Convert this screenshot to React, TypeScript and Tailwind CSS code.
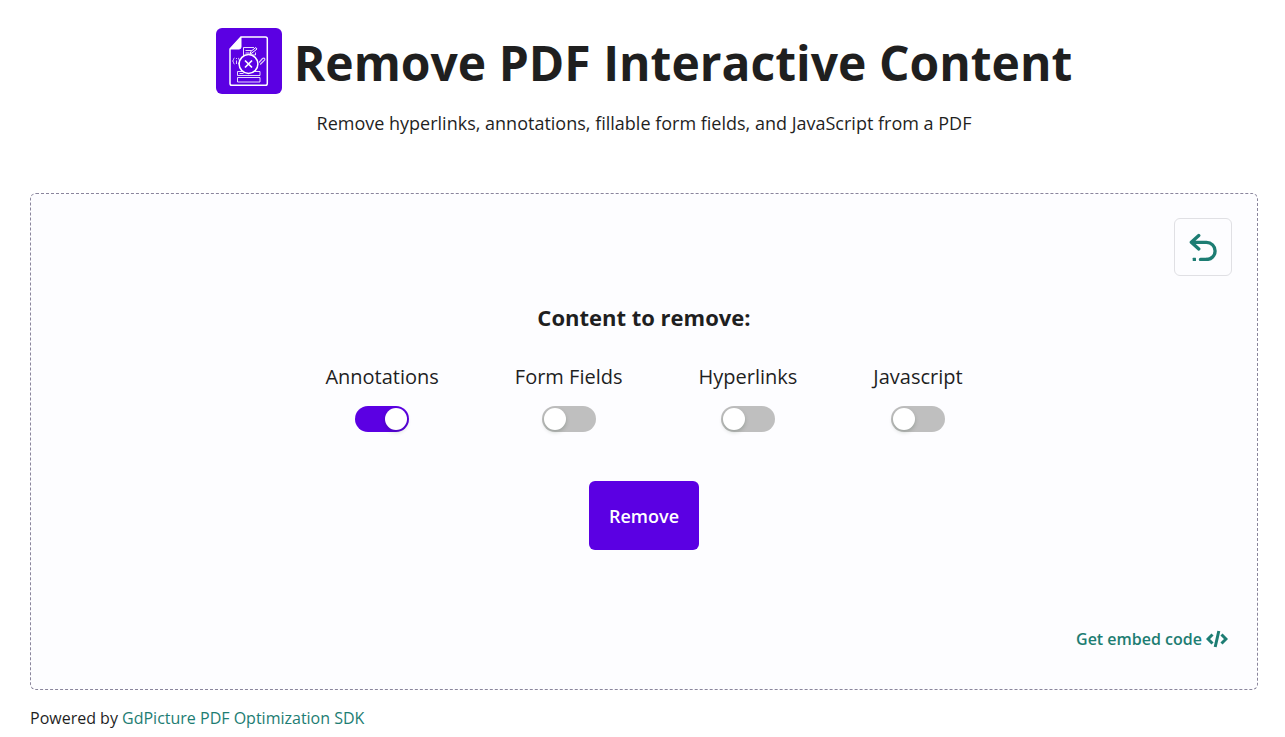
import { useState } from 'react'

const options = [
  { id: 'annotations', label: 'Annotations' },
  { id: 'form-fields', label: 'Form Fields' },
  { id: 'hyperlinks', label: 'Hyperlinks' },
  { id: 'javascript', label: 'Javascript' },
]

function ToolIcon() {
  return (
    <svg viewBox="0 0 66 66" className="size-[66px] shrink-0" fill="none" stroke="#fff" aria-hidden="true">
      <rect width="66" height="66" rx="6" fill="#5b00e3" stroke="none" />
      {/* Page with folded corner */}
      <path d="M25 9h24.500a1.800 1.800 0 0 1 1.800 1.800v44.700a1.800 1.800 0 0 1-1.800 1.800H15.800a1.800 1.800 0 0 1-1.800-1.800V21z" strokeWidth="1.500" />
      <path d="M14 21 25 9.200V19a2 2 0 0 1-2 2z" fill="#fff" strokeWidth="1" />
      {/* Note and pencil */}
      <path d="M27.500 28v-8.500H38M29.500 22.500h6M29.500 25h4M39.500 24.500V27H35" strokeWidth="1" strokeOpacity="0.85" />
      <path d="m34 26 .8-2.500 5-4 1.200 1.500-5 4z" strokeWidth="1" />
      {/* Braces and link */}
      <path d="M18.500 30c-1.500 0-.5 3-2 3 1.500 0 .5 3 2 3M20.500 32.500V36M20.500 30v1M22 30c1.500 0 .5 3 2 3-1.500 0-.5 3-2 3" strokeWidth="1" strokeOpacity="0.8" />
      <path d="m43 34.500 3.500-4q1.500-1 2.200.2t-1 2.300l-3.500 3.500" strokeWidth="1.200" strokeOpacity="0.8" />
      {/* Form rows */}
      <path d="M21.500 43.500h22.500v4H21.500zM23.500 45.500h4M21.500 49.500h22.500v4.500H21.500z" strokeWidth="1" strokeOpacity="0.85" />
      <circle cx="32.500" cy="36" r="9.400" fill="#5b00e3" strokeWidth="1.500" />
      <path d="m29 32.500 7 7m0-7-7 7" strokeWidth="1.700" />
    </svg>
  )
}

function UndoIcon() {
  return (
    <svg viewBox="0 0 28 28" className="size-7" fill="none" stroke="#1d7d73" strokeWidth="3.300" aria-hidden="true">
      <path d="M9.800 2.500 2.300 9.300l7.500 6.700M3 9.300h14.500a8.600 8.600 0 0 1 0 17.200" strokeLinecap="round" strokeLinejoin="round" />
      <path d="M17.500 26.500h-6" strokeLinecap="round" />
      <rect x="3.700" y="24.800" width="3.300" height="3.200" rx="0.500" fill="#1d7d73" stroke="none" />
    </svg>
  )
}

function CodeIcon() {
  return (
    <svg viewBox="0 0 22 18" className="h-[18px] w-[22px]" fill="none" stroke="#1d7d73" strokeWidth="3" aria-hidden="true">
      <path d="M6.500 4.500 2 9l4.500 4.500M15.500 4.500 20 9l-4.500 4.500M12.800 1 9.200 17" />
    </svg>
  )
}

export default function App() {
  const [selected, setSelected] = useState<string[]>(['annotations'])

  const toggle = (id: string) => {
    setSelected(selected.includes(id) ? selected.filter((s) => s !== id) : [...selected, id])
  }

  return (
    <div className="bg-white pt-7 pl-[30px] pr-[27px] pb-1 text-[#1f1f1f] font-['Open_Sans',sans-serif]">
      <header className="text-center">
        <div className="flex items-center justify-center gap-3">
          <ToolIcon />
          <h1 className="pt-1 text-[48px] leading-[62px] font-bold">Remove PDF Interactive Content</h1>
        </div>
        <p className="mt-[15px] text-[18px] leading-7">
          Remove hyperlinks, annotations, fillable form fields, and JavaScript from a PDF
        </p>
      </header>

      <main className="mt-14 rounded-md border border-dashed border-[#8a859c] bg-[#fdfdff] px-[25px] pt-6 pb-[38px]">
        <div className="flex justify-end">
          <button type="button" aria-label="Back" className="flex size-[58px] items-center justify-center rounded-md border border-[#e0e0e4]">
            <UndoIcon />
          </button>
        </div>

        <form className="flex flex-col items-center" onSubmit={(e) => e.preventDefault()}>
          <h2 className="mt-[27px] text-[22px] leading-7 font-bold">Content to remove:</h2>
          <div className="mt-8 flex gap-[76px]">
            {options.map(({ id, label }) => (
              <div key={id} className="flex flex-col items-center gap-[15px]">
                <label htmlFor={id} className="text-[20px] leading-7">{label}</label>
                <input
                  id={id}
                  type="checkbox"
                  checked={selected.includes(id)}
                  onChange={() => toggle(id)}
                  className="h-[26px] w-[54px] cursor-pointer appearance-none rounded-full bg-[#bfbfbf] p-[2px] before:block before:size-[22px] before:rounded-full before:bg-white before:shadow-[0_2px_4px_rgba(0,35,11,0.2)] before:content-[''] checked:bg-[#5b00e3] checked:before:ml-[28px]"
                />
              </div>
            ))}
          </div>
          <button type="submit" className="mt-[49px] h-[69px] rounded-md bg-[#5b00e3] px-5 pt-[2px] text-[18px] font-semibold text-white">
            Remove
          </button>
        </form>

        <div className="mt-[77px] flex justify-end pr-1">
          <a href="#embed" className="flex items-center gap-1 text-[16px] leading-6 font-semibold text-[#1d7d73]">
            Get embed code
            <CodeIcon />
          </a>
        </div>
      </main>

      <footer className="mt-4 text-[16px] leading-6">
        Powered by{' '}
        <a href="#sdk" className="text-[#1d7d73]">GdPicture PDF Optimization SDK</a>
      </footer>
    </div>
  )
}
